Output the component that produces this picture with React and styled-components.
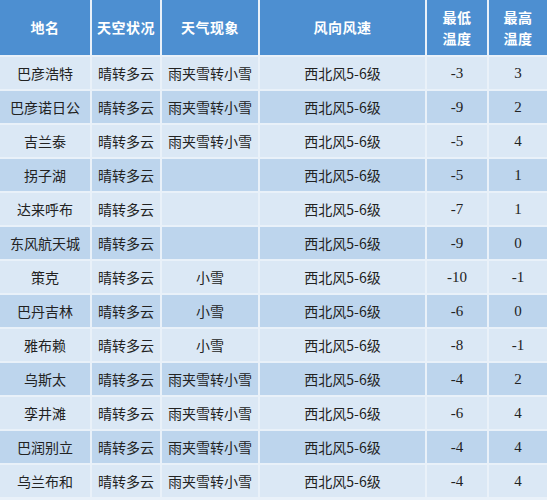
import React from "react";
import styled, { createGlobalStyle } from "styled-components";

const Global = createGlobalStyle`
  html, body { margin: 0; padding: 0; background: #ffffff; }
  body { font-family: "Noto Sans CJK SC", "Noto Sans", sans-serif; }
`;

const Grid = styled.div`
  display: grid;
  grid-template-columns: 90px 68px 96px 165px 60px 58px;
  grid-auto-rows: 32px;
  grid-template-rows: 55px;
  gap: 2px;
  width: 547px;
  height: 500px;
  overflow: hidden;
  background: #e9f1f9;
`;

const Head = styled.div`
  background: #4d8fd1;
  color: #ffffff;
  font-weight: 700;
  font-size: 14px;
  line-height: 20.5px;
  display: flex;
  flex-direction: column;
  align-items: center;
  justify-content: center;
  text-align: center;
  letter-spacing: 0.5px;
`;

const Cell = styled.div`
  background: ${(p) => (p.$alt ? "#bdd5ed" : "#dbe8f5")};
  color: #222222;
  font-size: ${(p) => (p.$num ? "15px" : "14px")};
  display: flex;
  align-items: center;
  justify-content: center;
  white-space: nowrap;
  font-family: ${(p) =>
    p.$num ? '"Liberation Serif", "DejaVu Serif", serif' : '"Noto Sans CJK SC", sans-serif'};
`;

const headers = [["地名"], ["天空状况"], ["天气现象"], ["风向风速"], ["最低", "温度"], ["最高", "温度"]];

const rows = [
  ["巴彦浩特", "晴转多云", "雨夹雪转小雪", "西北风5-6级", "-3", "3"],
  ["巴彦诺日公", "晴转多云", "雨夹雪转小雪", "西北风5-6级", "-9", "2"],
  ["吉兰泰", "晴转多云", "雨夹雪转小雪", "西北风5-6级", "-5", "4"],
  ["拐子湖", "晴转多云", "", "西北风5-6级", "-5", "1"],
  ["达来呼布", "晴转多云", "", "西北风5-6级", "-7", "1"],
  ["东风航天城", "晴转多云", "", "西北风5-6级", "-9", "0"],
  ["策克", "晴转多云", "小雪", "西北风5-6级", "-10", "-1"],
  ["巴丹吉林", "晴转多云", "小雪", "西北风5-6级", "-6", "0"],
  ["雅布赖", "晴转多云", "小雪", "西北风5-6级", "-8", "-1"],
  ["乌斯太", "晴转多云", "雨夹雪转小雪", "西北风5-6级", "-4", "2"],
  ["孪井滩", "晴转多云", "雨夹雪转小雪", "西北风5-6级", "-6", "4"],
  ["巴润别立", "晴转多云", "雨夹雪转小雪", "西北风5-6级", "-4", "4"],
  ["乌兰布和", "晴转多云", "雨夹雪转小雪", "西北风5-6级", "-4", "4"],
];

export default function App() {
  return (
    <>
      <Global />
      <Grid>
        {headers.map((h, i) => (
          <Head key={i}>
            {h.map((l, j) => (
              <span key={j}>{l}</span>
            ))}
          </Head>
        ))}
        {rows.map((r, ri) =>
          r.map((c, ci) => (
            <Cell key={ri + "-" + ci} $alt={ri % 2 === 1} $num={ci >= 4}>
              {c}
            </Cell>
          ))
        )}
      </Grid>
    </>
  );
}
